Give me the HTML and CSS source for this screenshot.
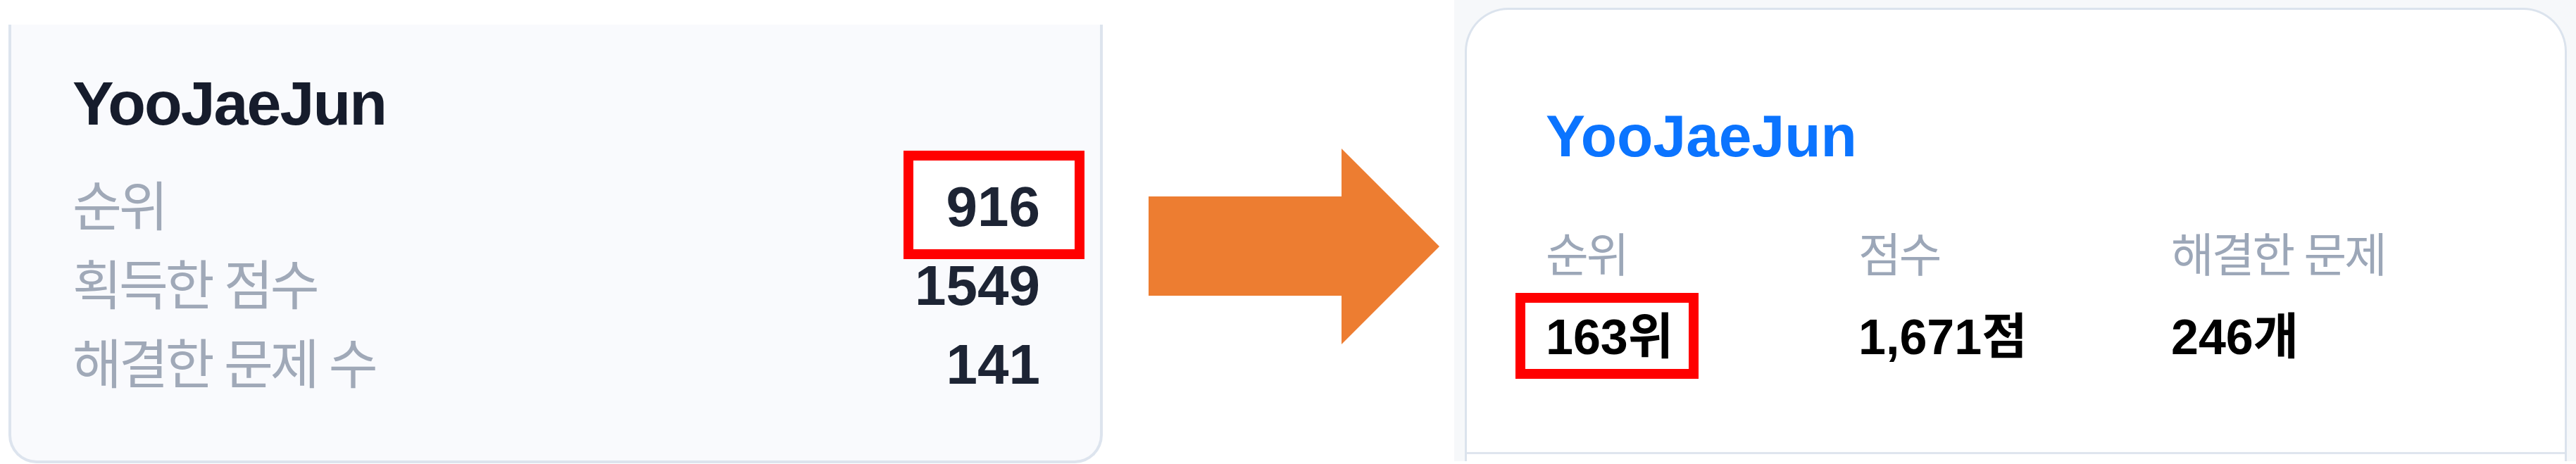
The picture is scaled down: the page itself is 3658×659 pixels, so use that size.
FILE: index.html
```html
<!DOCTYPE html>
<html lang="ko">
<head>
  <meta charset="UTF-8" />
  <meta name="viewport" content="width=device-width, initial-scale=1.0" />
  <title>Profile before / after</title>
  <link rel="stylesheet" href="styles.css">
</head>
<body>
  <div class="old-card">
    <h2 class="old-name">YooJaeJun</h2>
    <div class="old-row">
      <span class="old-label">순위</span>
      <span class="old-value mark mark-old">916</span>
    </div>
    <div class="old-row">
      <span class="old-label">획득한 점수</span>
      <span class="old-value">1549</span>
    </div>
    <div class="old-row">
      <span class="old-label">해결한 문제 수</span>
      <span class="old-value">141</span>
    </div>
  </div>

  <svg class="arrow" width="413" height="278" viewBox="0 0 413 278">
    <polygon points="0,68 274,68 274,0 413,139 274,278 274,209 0,209" fill="#ed7d31" />
  </svg>

  <div class="panel">
    <div class="new-card">
      <h2 class="new-name">YooJaeJun</h2>
      <div class="stats">
        <div class="stat">
          <span class="stat-label">순위</span>
          <span class="stat-value mark mark-new">163위</span>
        </div>
        <div class="stat">
          <span class="stat-label">점수</span>
          <span class="stat-value">1,671점</span>
        </div>
        <div class="stat">
          <span class="stat-label">해결한 문제</span>
          <span class="stat-value">246개</span>
        </div>
      </div>
      <div class="divider"></div>
    </div>
  </div>
</body>
</html>
```

FILE: styles.css
```css
body {
  margin: 0;
  height: 659px;
  overflow: hidden;
  background: #ffffff;
  display: flex;
  align-items: flex-start;
  font-family: "Liberation Sans", "Noto Sans CJK KR", sans-serif;
}

/* before */
.old-card {
  box-sizing: border-box;
  width: 1554px;
  height: 623px;
  margin: 35px 0 0 12px;
  padding: 68px 85px 0 87px;
  background: #f9fafd;
  border: 4px solid #dde4ee;
  border-top: none;
  border-radius: 0 0 40px 40px;
}
.old-name {
  margin: 0 0 47px;
  font-size: 88px;
  line-height: 88px;
  letter-spacing: -2px;
  font-weight: bold;
  color: #161c2c;
}
.old-row {
  display: flex;
  justify-content: space-between;
  align-items: baseline;
  height: 112px;
}
.old-label {
  font-size: 76px;
  line-height: 112px;
  letter-spacing: -4px;
  color: #a0a9b8;
}
.old-value {
  font-size: 80px;
  line-height: 112px;
  font-weight: bold;
  color: #1d2434;
}

/* highlight box drawn over the screenshot */
.mark {
  position: relative;
  z-index: 0;
}
.mark::after {
  content: "";
  position: absolute;
  z-index: -1;
  border: 14px solid #ff0000;
  background: #ffffff;
}
.mark-old::after {
  left: -61px;
  right: -63px;
  top: -24px;
  bottom: -18px;
}
.mark-new::after {
  left: -43px;
  right: -36px;
  top: -28px;
  bottom: -24px;
}

.arrow {
  display: block;
  margin: 211px 0 0 65px;
}

/* after */
.panel {
  box-sizing: border-box;
  width: 1593px;
  height: 655px;
  margin-left: 21px;
  padding: 11px 13px 0 15px;
  background: #f6f8fa;
  overflow: hidden;
}
.new-card {
  height: 700px;
  padding: 137px 0 0;
  background: #ffffff;
  border: 3px solid #dbe3ed;
  border-bottom: none;
  border-radius: 62px 62px 0 0;
}
.new-name {
  margin: 0 0 95px 112px;
  font-size: 84px;
  line-height: 84px;
  font-weight: bold;
  color: #0b74ff;
}
.stats {
  display: grid;
  grid-template-columns: repeat(3, 444px);
  margin-left: 112px;
}
.stat {
  display: flex;
  flex-direction: column;
  align-items: flex-start;
}
.stat-label {
  font-size: 66px;
  line-height: 66px;
  letter-spacing: -3px;
  color: #9ca7b8;
}
.stat-value {
  margin-top: 48px;
  font-size: 70px;
  line-height: 70px;
  font-weight: bold;
  color: #000000;
}
.divider {
  margin-top: 128px;
  border-top: 3px solid #dfe5ee;
}
```
